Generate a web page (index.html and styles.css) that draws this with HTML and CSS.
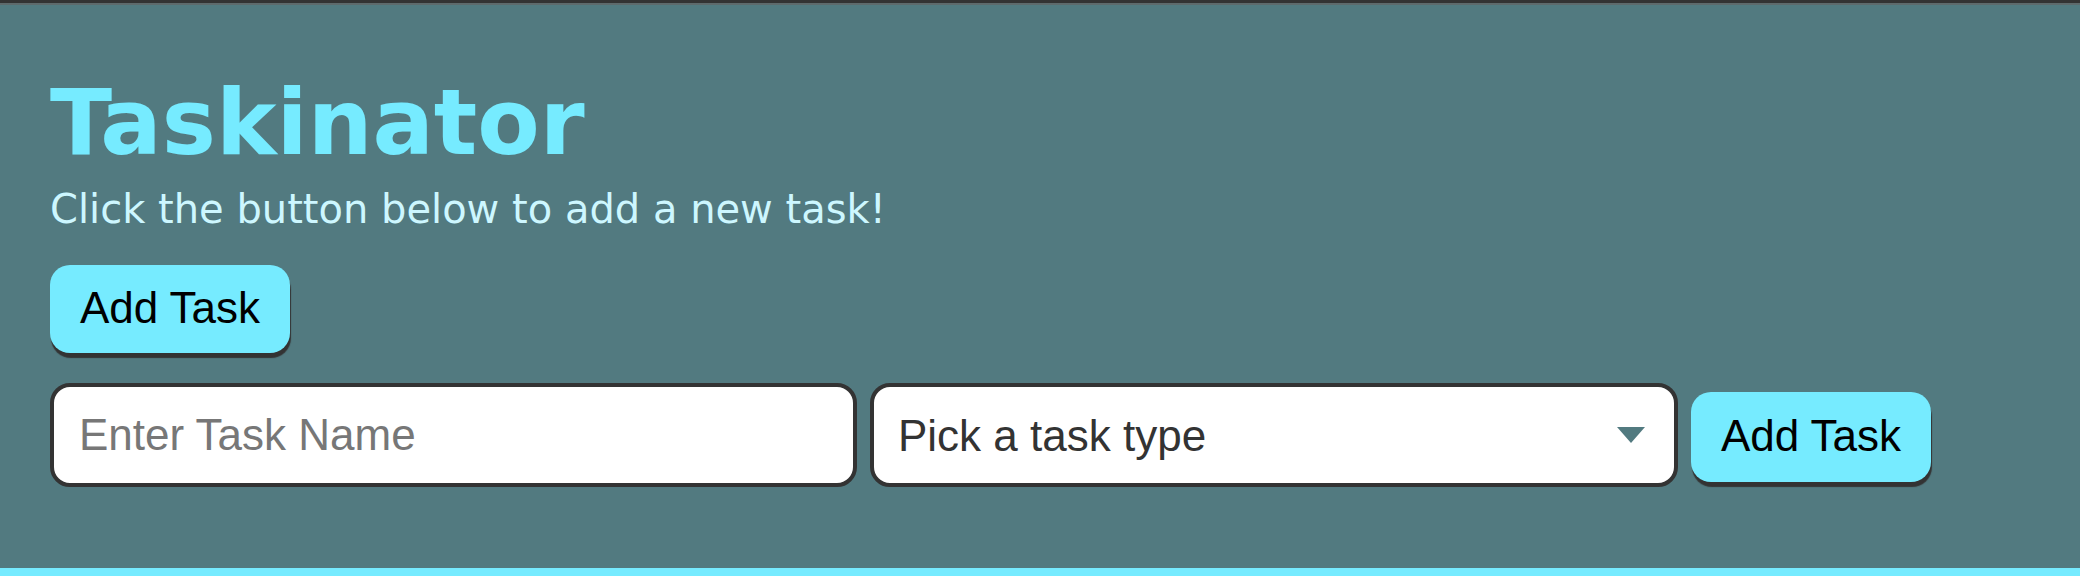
FILE: index.html
```html
<!DOCTYPE html>
<html lang="en">
<head>
<meta charset="utf-8">
<title>Taskinator</title>
<link rel="stylesheet" href="styles.css">
</head>
<body>
<header class="header">
  <h1 class="page-title">Taskinator</h1>
  <p class="subtitle">Click the button below to add a new task!</p>
  <button class="btn" type="button">Add Task</button>
  <form class="task-form">
    <input class="form-field" type="text" placeholder="Enter Task Name">
    <span class="select-wrap">
      <select class="form-field form-select">
        <option value="" selected disabled>Pick a task type</option>
        <option>Print</option>
        <option>Web</option>
        <option>Mobile</option>
      </select>
    </span>
    <button class="btn" type="submit">Add Task</button>
  </form>
</header>
<main class="page-content"></main>
</body>
</html>
```
FILE: styles.css
```css
* {
  box-sizing: border-box;
}

html, body {
  margin: 0;
  height: 100%;
}

body {
  display: flex;
  flex-direction: column;
  background: #76ebff;
  border-top: 3px solid #333333;
}

.header {
  background: #527a80;
  border-top: 2px solid #5e6a6c;
  padding: 72px 50px 81px 50px;
  display: flex;
  flex-direction: column;
  align-items: flex-start;
}

.page-title {
  margin: 0;
  font-family: "DejaVu Sans", Verdana, sans-serif;
  font-weight: bold;
  font-size: 91px;
  line-height: 91px;
  color: #76ebff;
}

.subtitle {
  margin: 21px 0 0 0;
  font-family: "DejaVu Sans", Verdana, sans-serif;
  font-size: 40px;
  line-height: 40px;
  color: #cdf7ff;
}

.btn {
  margin-top: 36px;
  width: 240px;
  height: 88px;
  padding: 0 0 2px 0;
  border: none;
  border-radius: 20px;
  background: #76ebff;
  color: #000;
  font-family: "Liberation Sans", Arial, sans-serif;
  font-size: 44px;
  box-shadow: 1px 5px 1px #333333;
  cursor: pointer;
}

.task-form {
  margin-top: 30px;
  display: flex;
  align-items: center;
  gap: 13px;
}

.task-form .btn {
  margin-top: 4px;
  height: 90px;
}

.form-field {
  width: 807px;
  height: 104px;
  border: 4px solid #333333;
  border-radius: 20px;
  background: #ffffff;
  padding: 0 0 0 25px;
  font-family: "Liberation Sans", Arial, sans-serif;
  font-size: 44px;
  color: #333333;
  outline: none;
}

.form-field::placeholder {
  color: #777777;
}

.select-wrap {
  position: relative;
  display: block;
}

.form-select {
  display: block;
  width: 808px;
  padding-left: 24px;
  appearance: none;
  -webkit-appearance: none;
}

.select-wrap::after {
  content: "";
  position: absolute;
  right: 33px;
  top: 44px;
  width: 0;
  height: 0;
  border-left: 14.5px solid transparent;
  border-right: 14.5px solid transparent;
  border-top: 16px solid #527a80;
  pointer-events: none;
}

.page-content {
  flex: 1;
  background: #76ebff;
}
```
